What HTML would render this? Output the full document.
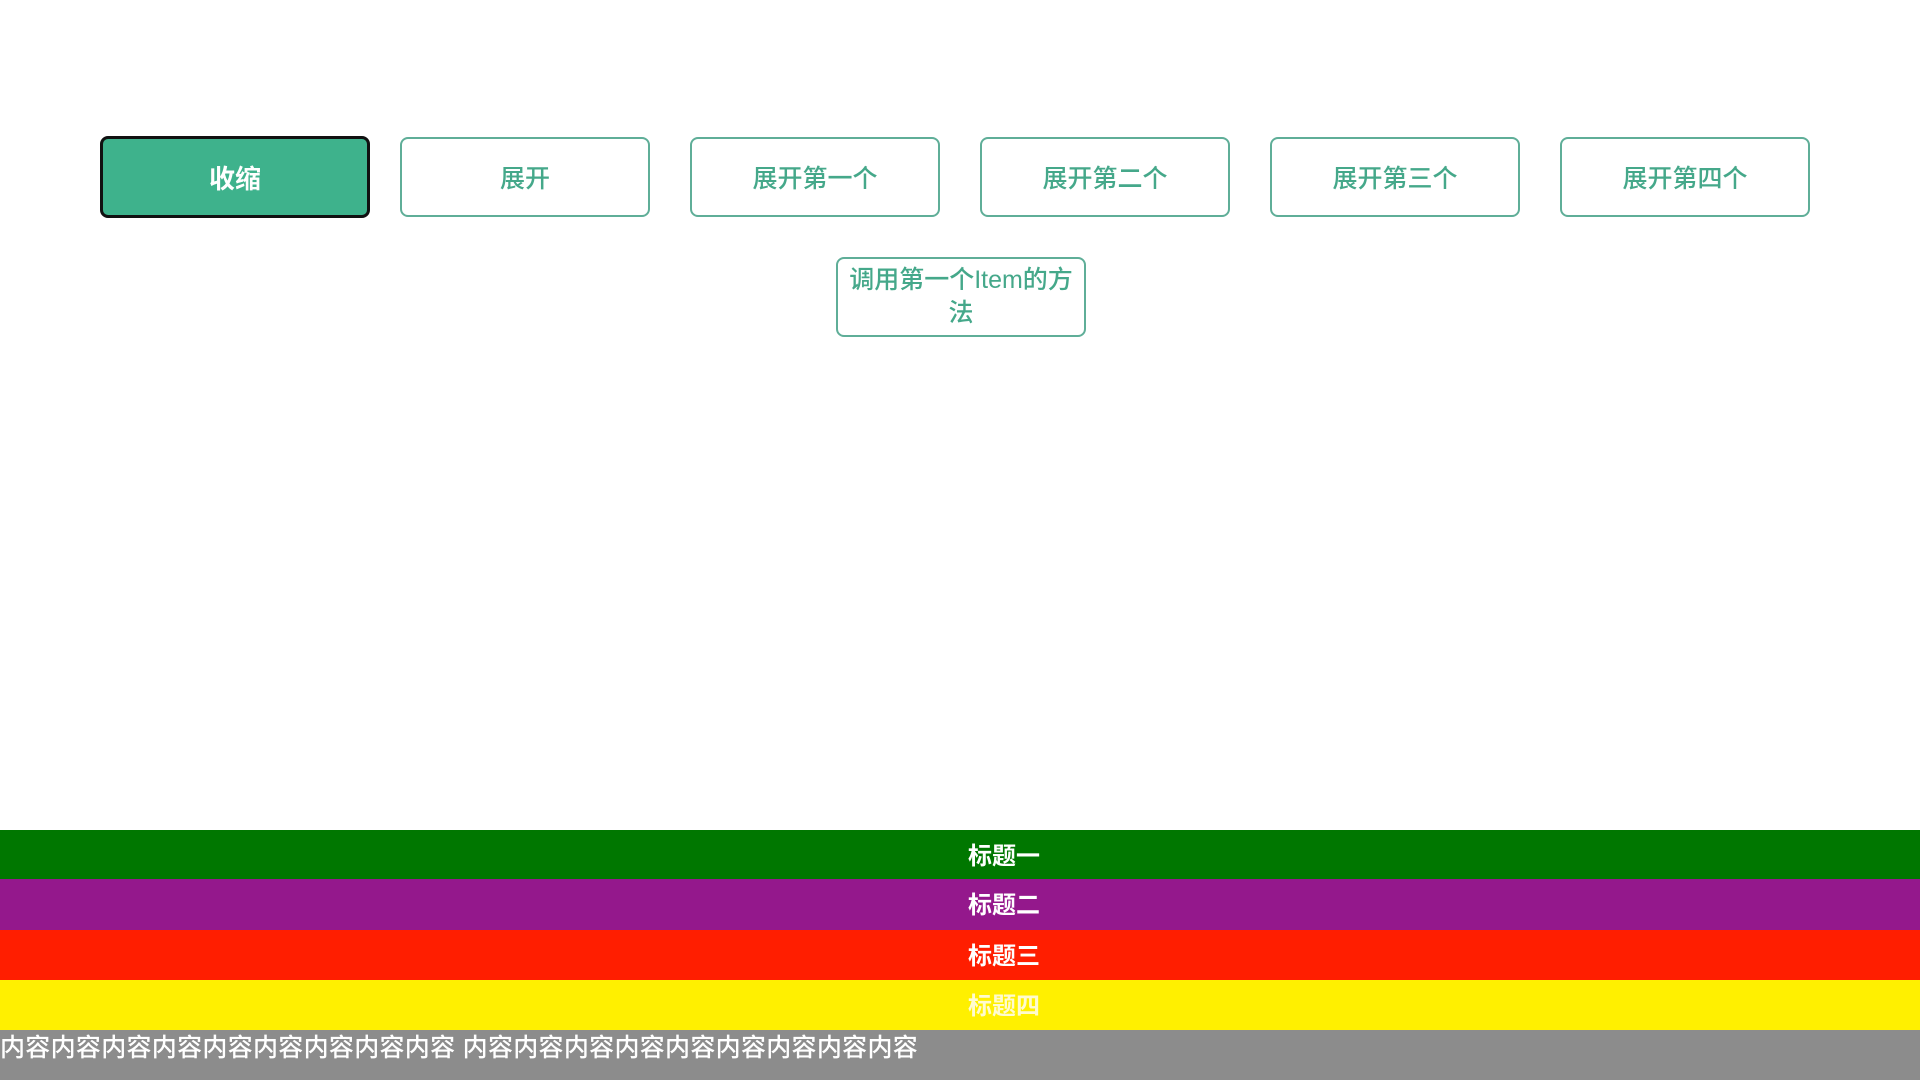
<!DOCTYPE html>
<html><head><meta charset="utf-8"><style>
html,body{margin:0;padding:0;width:1920px;height:1080px;overflow:hidden;background:#fff;font-family:"Liberation Sans","Noto Sans CJK SC",sans-serif;}
.b{position:absolute;box-sizing:border-box;border:2px solid #5fae98;border-radius:8px;color:#45a88a;font-size:25px;font-weight:500;display:flex;align-items:center;justify-content:center;text-align:center;background:#fff;}
.b.on{background:#3eb28c;border:3px solid #111;color:#fff;font-size:26px;font-weight:bold;}
.bar{position:absolute;left:0;width:1920px;height:50px;color:#fff;font-size:24px;font-weight:bold;}
.bar span{position:absolute;left:1004px;transform:translateX(-50%);top:12px;line-height:30px;}
</style></head><body>
<div class="b on" style="left:100px;top:136px;width:270px;height:82px;">收缩</div>
<div class="b" style="left:400px;top:137px;width:250px;height:80px;">展开</div>
<div class="b" style="left:690px;top:137px;width:250px;height:80px;">展开第一个</div>
<div class="b" style="left:980px;top:137px;width:250px;height:80px;">展开第二个</div>
<div class="b" style="left:1270px;top:137px;width:250px;height:80px;">展开第三个</div>
<div class="b" style="left:1560px;top:137px;width:250px;height:80px;">展开第四个</div>
<div class="b" style="left:836px;top:257px;width:250px;height:80px;line-height:33px;padding:0 6px;">调用第一个Item的方法</div>
<div class="bar" style="top:830px;height:49px;background:#007700;"><span>标题一</span></div>
<div class="bar" style="top:879px;height:51px;background:#94188c;"><span>标题二</span></div>
<div class="bar" style="top:930px;background:#ff1e00;"><span>标题三</span></div>
<div class="bar" style="top:980px;background:#fff000;color:#fffbd0;"><span>标题四</span></div>
<div class="bar" style="top:1030px;background:#8c8c8c;font-weight:500;font-size:25px;"><div style="position:absolute;left:0;top:3px;line-height:30px;white-space:nowrap;letter-spacing:0.3px;">内容内容内容内容内容内容内容内容内容 内容内容内容内容内容内容内容内容内容</div></div>
</body></html>
